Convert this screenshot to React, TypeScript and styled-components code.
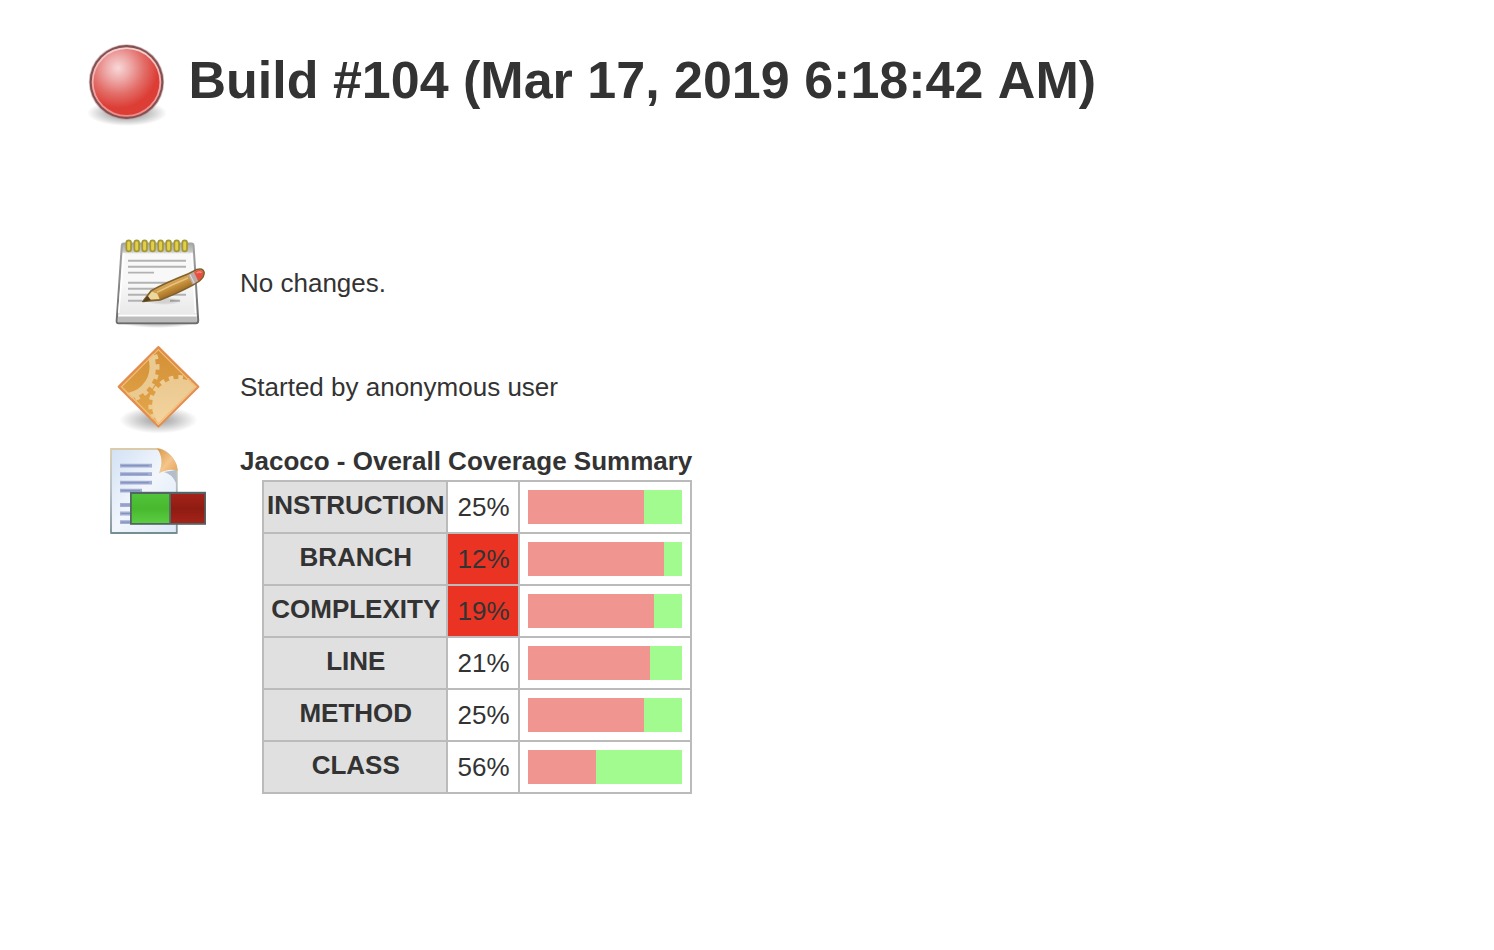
import React from "react";
import styled, { createGlobalStyle } from "styled-components";

const GlobalStyle = createGlobalStyle`
  body {
    margin: 0;
    background: #fff;
    color: #333;
    font-family: Helvetica, "Liberation Sans", Arial, sans-serif;
    font-size: 26px;
    line-height: 30px;
  }
`;

const Page = styled.main`
  box-sizing: border-box;
  min-height: 950px;
  padding: 35px 80px 0;
`;

const Header = styled.header`
  display: flex;
  align-items: flex-start;
  gap: 8.5px;
  height: 195px;
`;

const Title = styled.h1`
  margin: 0;
  padding-top: 16px;
  font-size: 52px;
  line-height: 58px;
  font-weight: bold;
  font-kerning: none;
  white-space: nowrap;
`;

const Summary = styled.section`
  display: flex;
  flex-direction: column;
  padding-left: 20px;
`;

const SummaryRow = styled.div<{ $height?: number }>`
  display: flex;
  align-items: flex-start;
  gap: 20px;
  height: ${({ $height }) => ($height ? `${$height}px` : "auto")};
`;

const Icon = styled.svg`
  display: block;
  flex: none;
`;

const Message = styled.p<{ $top: number }>`
  margin: 0;
  padding-top: ${({ $top }) => $top}px;
  white-space: nowrap;
`;

const Coverage = styled.div`
  padding-top: 6px;
  width: 452px;
`;

const CoverageTitle = styled.h2`
  margin: 0 0 4px;
  font-size: 26px;
  line-height: 30px;
  white-space: nowrap;
`;

const Table = styled.div`
  display: flex;
  flex-direction: column;
  gap: 2px;
  margin-left: 22px;
  padding: 2px;
  background: #bbb;
`;

const TableRow = styled.div`
  display: grid;
  grid-template-columns: 182px 70px 170px;
  gap: 2px;
  height: 50px;
`;

const Label = styled.div`
  padding-top: 8px;
  padding-left: 1.5px;
  background: #e0e0e0;
  font-weight: bold;
  text-align: center;
  white-space: nowrap;
`;

const Percent = styled.div<{ $failing: boolean }>`
  padding-top: 10px;
  padding-left: 1px;
  background: ${({ $failing }) => ($failing ? "#ea3323" : "#fff")};
  text-align: center;
`;

const BarCell = styled.div`
  padding: 8px;
  background: #fff;
`;

const Bar = styled.div`
  height: 34px;
  background: #a1fb8e;
`;

const Missed = styled.div`
  height: 100%;
  background: #f09590;
`;

const ROWS = [
  { name: "INSTRUCTION", percent: 25, missed: 116, failing: false },
  { name: "BRANCH", percent: 12, missed: 136, failing: true },
  { name: "COMPLEXITY", percent: 19, missed: 126, failing: true },
  { name: "LINE", percent: 21, missed: 122, failing: false },
  { name: "METHOD", percent: 25, missed: 116, failing: false },
  { name: "CLASS", percent: 56, missed: 68, failing: false },
];

const StatusBall = () => (
  <Icon width="100" height="100" viewBox="80 35 100 100">
    <defs>
      <radialGradient id="ball" gradientUnits="userSpaceOnUse" cx="118" cy="68" r="40">
        <stop offset="0" stopColor="#f8d8d8" />
        <stop offset="0.3" stopColor="#eeaaa9" />
        <stop offset="0.65" stopColor="#e36e69" />
        <stop offset="1" stopColor="#dc3e36" />
      </radialGradient>
      <linearGradient id="ballRim" x1="0" y1="0" x2="0" y2="1">
        <stop offset="0" stopColor="#f5d3d3" />
        <stop offset="1" stopColor="#f08a86" />
      </linearGradient>
      <radialGradient id="ballShadow">
        <stop offset="0.45" stopColor="#000" stopOpacity="0.28" />
        <stop offset="1" stopColor="#000" stopOpacity="0" />
      </radialGradient>
    </defs>
    <ellipse cx="127" cy="113" rx="40" ry="13" fill="url(#ballShadow)" />
    <circle cx="126.5" cy="82" r="37.7" fill="#b99594" opacity="0.6" />
    <circle cx="126.5" cy="82" r="36.9" fill="#855052" />
    <circle cx="126.5" cy="82" r="34.8" fill="url(#ballRim)" />
    <circle cx="126.5" cy="82" r="33" fill="url(#ball)" />
  </Icon>
);

const NotepadIcon = () => (
  <Icon width="120" height="105" viewBox="100 230 120 105">
    <defs>
      <linearGradient id="pad" x1="0" y1="0" x2="0" y2="1">
        <stop offset="0" stopColor="#a9aaa7" />
        <stop offset="0.1" stopColor="#c8c8c6" />
        <stop offset="0.13" stopColor="#f8f8f8" />
        <stop offset="0.5" stopColor="#f8f8f8" />
        <stop offset="0.9" stopColor="#e8e8e8" />
      </linearGradient>
      <linearGradient id="padEdge" x1="0" y1="0" x2="0" y2="1">
        <stop offset="0" stopColor="#a5a6a4" />
        <stop offset="1" stopColor="#6c6c6c" />
      </linearGradient>
      <radialGradient id="padShadow">
        <stop offset="0.5" stopColor="#000" stopOpacity="0.22" />
        <stop offset="1" stopColor="#000" stopOpacity="0" />
      </radialGradient>
      <linearGradient id="pencil" gradientUnits="userSpaceOnUse" x1="168" y1="280" x2="174" y2="294">
        <stop offset="0" stopColor="#ddb166" />
        <stop offset="0.5" stopColor="#cb953f" />
        <stop offset="1" stopColor="#a06d25" />
      </linearGradient>
    </defs>
    <ellipse cx="158" cy="322" rx="38" ry="6" fill="url(#padShadow)" />
    <path d="M123.6 243.6H191.6Q193.4 243.6 193.6 245.5L198.2 320.5Q198.2 323.3 196 323.3H118.5Q116.4 323.3 116.7 320.5L121.8 245.5Q122 243.6 123.6 243.6Z" fill="url(#pad)" stroke="url(#padEdge)" strokeWidth="2" />
    <path d="M118.3 316.5H196.7L197 322H118Z" fill="#bcbcbc" />
    <path d="M118.5 315.5H196.5" stroke="#fff" strokeWidth="1.6" />
    <path d="M124 253L118.7 313M191.5 253L195.5 313" stroke="#fff" strokeWidth="1.5" />
    <path d="M128 260.8H186M128 266.8H186M128 272.6H154M128 282.7H182M128 288.8H163M128 294.8H186M128 300.8H142M170 300.8H180" stroke="#b2b2b2" strokeWidth="1.9" />
    {[128.7, 136.7, 144.6, 152.6, 160.6, 168.6, 176.7, 184.7].map((x) => (
      <g key={x}>
        <rect x={x - 3.2} y="239.5" width="6.4" height="12.8" rx="3.2" fill="#a59733" />
        <rect x={x - 1.5} y="241.2" width="3" height="9.4" rx="1.5" fill="#e0d04a" />
      </g>
    ))}
    <ellipse cx="164" cy="301" rx="18" ry="4" fill="url(#padShadow)" opacity="0.55" />
    <path d="M142.8 301.5L151.4 290.6Q166 282.6 188.5 273.8L196.8 269.5Q202.8 267.6 204.1 272.2Q204.6 276.8 199.5 280.8L192.4 285.4Q175 294.6 160 300Z" fill="url(#pencil)" stroke="#80602e" strokeWidth="1.6" strokeLinejoin="round" />
    <path d="M145.3 299.8L151.8 291.7L157.2 293.6L159.6 299Z" fill="#ecd79e" />
    <path d="M142.3 301.9L147.6 295.8L151 300.3Z" fill="#574322" />
    <path d="M156.8 292.4Q173 284 188 278" stroke="#e6c27e" strokeWidth="1.6" fill="none" />
    <path d="M188.2 274.9L193.8 272L198.2 281L192.4 284.5Z" fill="#b9aaa8" />
    <path d="M190 274.6L194.2 283.2" stroke="#dfd8d5" strokeWidth="1.2" />
    <path d="M194 272L197.6 270.3Q202.2 269 203.2 272.7Q203.4 276.6 198.3 280.7Z" fill="#e74d43" />
    <path d="M196.5 273.2Q200 270.6 201.5 273" stroke="#fb8478" strokeWidth="1.6" fill="none" />
  </Icon>
);

const CauseIcon = () => (
  <Icon width="120" height="100" viewBox="100 340 120 100">
    <defs>
      <clipPath id="causeClip">
        <path d="M158.4 347L198.4 386.7L158.4 426.6L118.6 386.7Z" />
      </clipPath>
      <linearGradient id="cause" x1="0" y1="0" x2="0" y2="1">
        <stop offset="0" stopColor="#d38f35" />
        <stop offset="1" stopColor="#e6a84e" />
      </linearGradient>
      <linearGradient id="gear" x1="0" y1="0" x2="0" y2="1">
        <stop offset="0" stopColor="#eac88f" />
        <stop offset="1" stopColor="#f7d6a3" />
      </linearGradient>
      <radialGradient id="causeShadow">
        <stop offset="0" stopColor="#000" stopOpacity="0.38" />
        <stop offset="0.4" stopColor="#000" stopOpacity="0.24" />
        <stop offset="1" stopColor="#000" stopOpacity="0" />
      </radialGradient>
    </defs>
    <ellipse cx="158.5" cy="420" rx="39" ry="13.5" fill="url(#causeShadow)" />
    <g clipPath="url(#causeClip)">
      <rect x="117" y="346" width="83" height="82" fill="url(#cause)" />
      <circle cx="123.5" cy="367" r="29.3" fill="none" stroke="#ebca92" strokeWidth="6.4" />
      <circle cx="123.5" cy="367" r="33.8" fill="none" stroke="#ebca92" strokeWidth="4.4" strokeDasharray="4.6 5" strokeDashoffset="2" />
      <circle cx="179" cy="405.7" r="27" fill="url(#gear)" />
      <circle cx="179" cy="405.7" r="28.4" fill="none" stroke="#edcd96" strokeWidth="4.4" strokeDasharray="4.6 4.9" />
    </g>
    <path d="M158.4 349.6L195.6 386.7L158.4 423.6L121.4 386.7Z" fill="none" stroke="#f1bf78" strokeWidth="1.3" />
    <path d="M158.4 347L198.4 386.7L158.4 426.6L118.6 386.7Z" fill="none" stroke="#e48c4e" strokeWidth="2" strokeLinejoin="round" />
  </Icon>
);

const CoverageIcon = () => (
  <Icon width="120" height="105" viewBox="100 440 120 105">
    <defs>
      <linearGradient id="sheet" x1="0" y1="0" x2="1" y2="1">
        <stop offset="0" stopColor="#d2e1f4" />
        <stop offset="0.5" stopColor="#f2f6fc" />
        <stop offset="1" stopColor="#dce8f6" />
      </linearGradient>
      <linearGradient id="sheetEdge" x1="0" y1="0" x2="0" y2="1">
        <stop offset="0" stopColor="#dccbaa" />
        <stop offset="0.45" stopColor="#b3bec3" />
        <stop offset="1" stopColor="#789096" />
      </linearGradient>
      <linearGradient id="fold" x1="0" y1="0" x2="1" y2="1">
        <stop offset="0" stopColor="#d99645" />
        <stop offset="0.55" stopColor="#f5c58a" />
        <stop offset="1" stopColor="#e4a15a" />
      </linearGradient>
      <linearGradient id="covered" x1="0" y1="0" x2="0" y2="1">
        <stop offset="0" stopColor="#50c33a" />
        <stop offset="0.5" stopColor="#48b92f" />
        <stop offset="1" stopColor="#5bcd41" />
      </linearGradient>
      <linearGradient id="uncovered" x1="0" y1="0" x2="0" y2="1">
        <stop offset="0" stopColor="#a52319" />
        <stop offset="0.5" stopColor="#8e1c12" />
        <stop offset="1" stopColor="#a52319" />
      </linearGradient>
      <filter id="lineSoft" x="-10%" y="-20%" width="120%" height="140%">
        <feGaussianBlur stdDeviation="0.7" />
      </filter>
    </defs>
    <path d="M111 449H158C168 451 176.8 461 176.8 471V532.8H111Z" fill="url(#sheet)" stroke="url(#sheetEdge)" strokeWidth="1.8" />
    <path d="M111 533H177" stroke="#748e94" strokeWidth="1.8" />
    <path d="M164 472L176 470V483Q172 474 164 472Z" fill="#b4bdca" />
    <path d="M157 448.4C167 449.5 177.6 460 177.6 471C172 468.6 166 469.6 159 473.2C163 463 162 455 157 448.4Z" fill="url(#fold)" />
    <path d="M120 465.6H152M120 474.1H152M120 482.7H152M120 490.7H142M120 505H132M120 513.5H132M120 522.2H132" stroke="#a3aed2" strokeWidth="3.8" filter="url(#lineSoft)" />
    <path d="M121 465.6H149M121 474.1H148M121 482.7H149M121 490.7H140M121 505H131M121 513.5H131M121 522.2H131" stroke="#8593c0" strokeWidth="1.2" />
    <rect x="130" y="491.8" width="76" height="33" fill="#526463" />
    <rect x="131.8" y="494" width="37.4" height="29" fill="url(#covered)" />
    <rect x="171" y="494" width="33.4" height="29" fill="url(#uncovered)" />
  </Icon>
);

export default function App() {
  return (
    <>
      <GlobalStyle />
      <Page>
        <Header>
          <StatusBall />
          <Title>Build #104 (Mar 17, 2019 6:18:42 AM)</Title>
        </Header>
        <Summary>
          <SummaryRow $height={110}>
            <NotepadIcon />
            <Message $top={38}>No changes.</Message>
          </SummaryRow>
          <SummaryRow $height={100}>
            <CauseIcon />
            <Message $top={32}>Started by anonymous user</Message>
          </SummaryRow>
          <SummaryRow>
            <CoverageIcon />
            <Coverage>
              <CoverageTitle>Jacoco - Overall Coverage Summary</CoverageTitle>
              <Table>
                {ROWS.map((row) => (
                  <TableRow key={row.name}>
                    <Label>{row.name}</Label>
                    <Percent $failing={row.failing}>{row.percent}%</Percent>
                    <BarCell>
                      <Bar>
                        <Missed style={{ width: row.missed }} />
                      </Bar>
                    </BarCell>
                  </TableRow>
                ))}
              </Table>
            </Coverage>
          </SummaryRow>
        </Summary>
      </Page>
    </>
  );
}
